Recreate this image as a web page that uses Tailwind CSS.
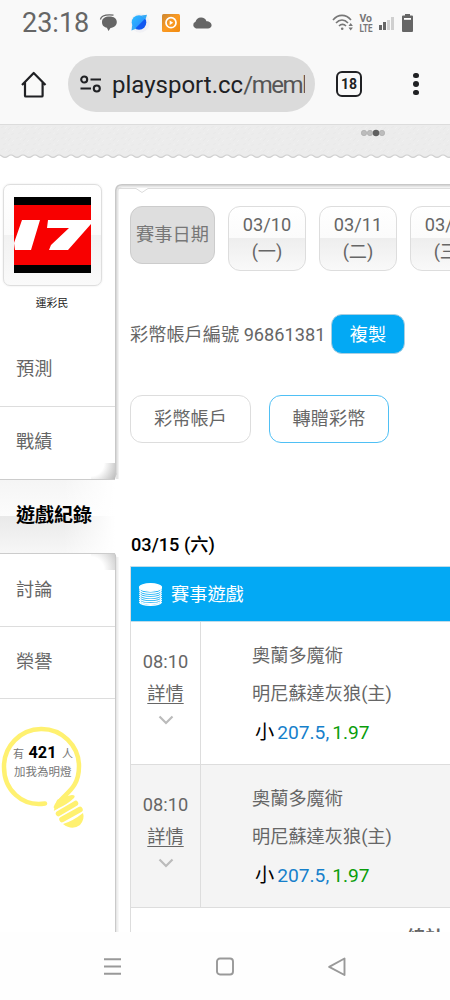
<!DOCTYPE html>
<html lang="zh-Hant">
<head>
<meta charset="utf-8">
<meta name="viewport" content="width=device-width">
<title>playsport.cc</title>
<script src="https://cdn.jsdelivr.net/npm/@tailwindcss/browser@4"></script>
</head>
<body class="w-[450px] h-[1000px] overflow-hidden bg-white flex flex-col text-[18.2px] leading-6 text-[#666] font-['Roboto','Noto_Sans_CJK_TC',sans-serif]">

<!-- Status bar -->
<header class="h-[124px] shrink-0 bg-[#f9f9f9] flex flex-col">
  <div class="h-[46px] flex items-center pl-[22px] text-[#666]">
    <span class="w-[67px] text-[27px] leading-[46px] whitespace-nowrap">23:18</span>
    <svg class="ml-[10px] w-[19px] h-[18px]" viewBox="0 0 19 18"><path d="M14.500 1.200C8 .5 2.300 1.500 1.400 5.500" fill="none" stroke="#666" stroke-width="1.200"/><path d="M10.500 2.600C15 2.600 17.800 4.800 17.800 8c0 3.500-2.500 5.400-6.300 5.900L9.500 17l-1.600-3.300C5 13 3 11.500 3 8c0-3.400 3-5.400 7.500-5.400Z" fill="#666"/></svg>
    <svg class="ml-3 w-[20px] h-[20px]" viewBox="0 0 20 20"><defs><linearGradient id="planet" x1="0" y1="0" x2="1" y2="1"><stop offset="0" stop-color="#2fc0ff"/><stop offset="0.550" stop-color="#2a9cff"/><stop offset="0.600" stop-color="#1258f0"/><stop offset="1" stop-color="#1258f0"/></linearGradient></defs><circle cx="10" cy="10" r="9.700" fill="#f1f1f5"/><circle cx="9" cy="9.500" r="7.300" fill="url(#planet)"/><path d="M1.500 17.500 2.200 12 6.500 15.500ZM11.500 2.500 17 1.800 15.500 6.500Z" fill="#35aaf5"/></svg>
    <svg class="ml-[12px] w-[18px] h-[18px]" viewBox="0 0 18 18"><defs><linearGradient id="orange" x1="0" y1="0" x2="1" y2="1"><stop offset="0" stop-color="#cc8733"/><stop offset=".5" stop-color="#fb9a22"/><stop offset="1" stop-color="#f08a10"/></linearGradient></defs><rect width="18" height="18" rx="1.500" fill="url(#orange)"/><circle cx="9" cy="8.700" r="5" fill="none" stroke="#fff" stroke-width="1.700"/><path d="M7.700 6.500v4.400L11.200 8.700Z" fill="#fff"/></svg>
    <svg class="ml-[12px] w-[20px] h-[12px]" viewBox="0 0 20 12"><path d="M4 11.500A3.500 3.500 0 0 1 3.500 4.800 5.800 5.800 0 0 1 14.500 4.300C17.500 4.300 19.600 6.200 19.600 8.300 19.600 10.200 18 11.500 16 11.500Z" fill="#666"/></svg>
    <svg class="ml-[120px] w-[22px] h-[18px]" viewBox="0 0 22 18" fill="none" stroke="#777" stroke-width="1.600"><path d="M1 6C6-.2 14-.2 19 6M4 9c3.500-4 8.500-4 12 0M7 12c2-2.200 5-2.200 7 0"/><circle cx="10.200" cy="14.800" r="1.300" fill="#777" stroke="none"/><path d="M16.500 12 18.700 9l2.200 3ZM16.500 13.500 18.700 16.500l2.200-3Z" fill="#777" stroke="none"/></svg>
    <svg class="ml-[5px] w-[14px] h-[20px]" viewBox="0 0 14 20" fill="#777" font-weight="700"><text x="0.500" y="9.300" font-size="11.500" textLength="12.500" lengthAdjust="spacingAndGlyphs">Vo</text><text x="0.500" y="18.800" font-size="11.500" textLength="13" lengthAdjust="spacingAndGlyphs">LTE</text></svg>
    <div class="ml-[6px] flex items-end gap-[1.500px] h-[13px]"><i class="w-[2.500px] h-[5px] bg-[#666]"></i><i class="w-[2.500px] h-[8px] bg-[#666]"></i><i class="w-[2.500px] h-[10px] bg-[#d0d0d0]"></i><i class="w-[2.500px] h-[13px] bg-[#d0d0d0]"></i></div>
    <svg class="ml-[8px] w-[11px] h-[18px]" viewBox="0 0 11 18"><path d="M3 0h5v1.500h2A1 1 0 0 1 11 2.500V17a1 1 0 0 1-1 1H1a1 1 0 0 1-1-1V2.500a1 1 0 0 1 1-1h2Z" fill="#666"/><path d="M2 4h7v1.800H2Z" fill="#fff"/></svg>
  </div>
  <!-- Address bar -->
  <div class="flex items-center mt-[10px] pl-[21px]">
    <svg class="w-[26px] h-[27px]" viewBox="0 0 26 27" fill="none" stroke="#202124" stroke-width="2.200"><path d="M1 14 12.700 2 24.500 14M4 11v13.700q0 .8.800.8h16q.8 0 .8-.8V11" stroke-linejoin="round"/></svg>
    <div class="ml-[21px] w-[247px] h-[56px] rounded-full bg-[#dbdbdb] flex items-center pl-[11px]">
      <svg class="w-[23px] h-[20px]" viewBox="0 0 23 20" fill="none" stroke="#202124" stroke-width="2.100"><circle cx="5.200" cy="5.500" r="3"/><circle cx="17.800" cy="14.500" r="3"/><path d="M11.500 5.500H22M1.500 14.500H12"/></svg>
      <span class="ml-[10px] mt-[2px] w-[193px] overflow-hidden whitespace-nowrap text-[24px] leading-8 text-[#202124]">playsport.cc<span class="tracking-[-1.400px] text-[#555]">/member</span></span>
    </div>
    <div class="ml-[21px] w-[26px] h-[26px] rounded-[6px] border-2 border-[#202124] text-[#202124] text-[14px] leading-none font-bold flex items-center justify-center">18</div>
    <div class="ml-[51px] flex flex-col gap-[3px]"><i class="size-[5.500px] rounded-full bg-[#202124]"></i><i class="size-[5.500px] rounded-full bg-[#202124]"></i><i class="size-[5.500px] rounded-full bg-[#202124]"></i></div>
  </div>
</header>

<!-- Page banner edge -->
<div class="h-[34px] shrink-0 border-t border-[#dcdcdc]">
  <svg class="block w-[450px] h-[34px]" viewBox="0 0 450 34">
    <defs>
      <pattern id="wave" x="-1" width="12" height="34" patternUnits="userSpaceOnUse"><path d="M0 0H12V30C9 30 9 32.300 6 32.300S3 30 0 30Z" fill="#ececec"/><path d="M0 30C3 30 3 32.300 6 32.300S9 30 12 30" fill="none" stroke="#cfcfcf" stroke-width="1.200"/></pattern>
      <pattern id="grain" width="15" height="11" patternUnits="userSpaceOnUse"><path d="M1 3 4 1M8 5l3-3M3 9l3-2M11 10l3-2" stroke="#e8e8e8" stroke-width="1"/><path d="M5 4l2-2M12 6l2-2M8 9l2-1" stroke="#f0f0f0" stroke-width="1"/></pattern>
    </defs>
    <rect width="450" height="34" fill="url(#wave)"/><rect width="450" height="29" fill="url(#grain)"/>
    <g fill="#bcbcbc" stroke="#a8a8a8" stroke-width=".6"><circle cx="364" cy="8" r="2.700"/><circle cx="370" cy="8" r="2.700"/><circle cx="382" cy="8" r="2.700"/></g><circle cx="376" cy="8" r="3.200" fill="#606060"/>
  </svg>
</div>

<div class="h-[774px] shrink-0 overflow-hidden flex pt-[26px]">
  <!-- Sidebar -->
  <aside class="w-[115px] shrink-0 flex flex-col">
    <div class="ml-[3px] w-[99px] h-[102px] rounded-[7px] border border-[#dedede] shadow-[0_0_2px_#e5e5e5] bg-[linear-gradient(#fff_0%,#fbfbfb_50%,#f2f2f2_50%,#fafafa_100%)] pl-[10px] pt-[12px]">
      <svg class="w-[77px] h-[76px]" viewBox="0 0 77 76"><rect width="77" height="76" fill="#000"/><rect y="8" width="77" height="60" fill="#f80000"/><path d="M8 23H26L17 53H1L0 46ZM34 23H77V27L54 53H35L37 48 55 31H33Z" fill="#fff"/></svg>
    </div>
    <div class="mt-[9px] w-[104px] text-center text-[10.800px] leading-[18px] text-[#222]">運彩民</div>
    <nav class="mt-[18px] flex flex-col">
      <a class="h-[76px] pl-4 leading-[75px] border-b border-[#ddd]">預測</a>
      <a class="h-[73px] pl-4 leading-[70px] border-b border-[#ccc] bg-[radial-gradient(circle_at_0_0,transparent_45%,#bbb_100%)] bg-no-repeat bg-[size:24px_16px] bg-right-bottom">戰績</a>
      <a class="h-[73px] w-[115px] pl-4 text-[19px] leading-[72px] font-bold text-black whitespace-nowrap bg-[linear-gradient(90deg,transparent_55%,#fff_100%),linear-gradient(#f5f5f5_0%,#fcfcfc_50%,#e9e9e9_50%,#f7f7f7_100%)]">遊戲紀錄</a>
      <a class="h-[74px] pl-4 leading-[71px] border-y border-t-[#ccc] border-b-[#ddd] bg-[radial-gradient(circle_at_0_100%,transparent_45%,#ccc_100%)] bg-no-repeat bg-[size:24px_16px] bg-right-top">討論</a>
      <a class="h-[72px] pl-4 leading-[70px] border-b border-[#ddd]">榮譽</a>
    </nav>
    <svg class="mt-[26px] w-[88px] h-[106px]" viewBox="0 0 88 106">
      <g fill="none" stroke="#fff170" stroke-width="4.500" stroke-linecap="round"><path d="M45 78.500C22 82 4 65 4 42A37.500 37.500 0 0 1 79 41C79 67 61 69 56 82"/></g>
      <path d="M54 85 57 75Q62 72 72 70 76 70 74 73Q68 79 57 84Q53 87 54 85Z" fill="#fff170"/>
      <g stroke="#fff170" stroke-width="5.500" stroke-linecap="round"><path d="M58.500 88.500 75.500 78.500M62 94.500 80 84.500"/></g>
      <path d="M63 99Q73 96 83 88 85 94 80 100 72 106 63 99Z" fill="#fff170"/>
      <g font-size="11.500" fill="#777"><text x="13" y="33" font-size="11">有</text><text x="28.500" y="33" font-size="16.500" font-weight="700" fill="#000" textLength="28" lengthAdjust="spacingAndGlyphs">421</text><text x="62" y="33" font-size="11">人</text><text x="14" y="50.500">加我為明燈</text></g>
    </svg>
  </aside>

  <!-- Content -->
  <main class="w-[335px] shrink-0 flex flex-col relative">
    <svg class="absolute left-0 top-0 w-[335px] h-[750px]" viewBox="0 0 335 750" fill="none">
      <path d="M2 295V8Q2 2 8 2H335" stroke="#e6e6e6" stroke-width="3"/>
      <path d="M.7 291V7Q1 .8 7 .8H335" stroke="#c8c8c8" stroke-width="1.500"/>
      <path d="M2 4.500H21L27 8.500 33 4.500H335" stroke="#ddd"/>
      <path d="M2.500 373V750" stroke="#f0f0f0" stroke-width="2"/>
      <path d="M.7 750V374Q.7 369 -3 369M-3 295Q.7 295 .7 289" stroke="#c8c8c8" stroke-width="1.300"/>
    </svg>
    <div class="ml-[15px] mt-[22px] flex items-start gap-[13px] text-center">
      <div class="w-[85px] h-[58px] shrink-0 rounded-xl border border-[#ccc] bg-[#dedede] leading-[55px] text-[#777]">賽事日期</div>
      <div class="w-[78px] h-[65px] shrink-0 rounded-xl border border-[#ddd] bg-[linear-gradient(#fff_0%,#fbfbfb_50%,#eee_50%,#f9f9f9_100%)] pt-[5px] leading-[26.500px]">03/10<br>(一)</div>
      <div class="w-[78px] h-[65px] shrink-0 rounded-xl border border-[#ddd] bg-[linear-gradient(#fff_0%,#fbfbfb_50%,#eee_50%,#f9f9f9_100%)] pt-[5px] leading-[26.500px]">03/11<br>(二)</div>
      <div class="w-[78px] h-[65px] shrink-0 rounded-xl border border-[#ddd] bg-[linear-gradient(#fff_0%,#fbfbfb_50%,#eee_50%,#f9f9f9_100%)] pt-[5px] leading-[26.500px]">03/12<br>(三)</div>
    </div>
    <div class="ml-[15px] mt-[43px] h-10 flex items-center">
      <span class="w-[201px] mt-[2px] whitespace-nowrap">彩幣帳戶編號 96861381</span>
      <span class="w-[74px] h-10 rounded-[11px] border border-[#a9cfe2] bg-[#03a9f4] text-white text-center leading-[40px]">複製</span>
    </div>
    <div class="ml-[15px] mt-[41px] flex gap-[18px] text-center leading-[46px]">
      <span class="w-[121px] h-[48px] rounded-xl border border-[#ddd]">彩幣帳戶</span>
      <span class="w-[120px] h-[48px] rounded-xl border border-[#4fc0f5]">轉贈彩幣</span>
    </div>
    <h2 class="ml-[16px] mt-[87px] h-[36px] leading-[30px] font-medium text-black">03/15 (六)</h2>
    <section class="ml-[15px] mt-[6px] w-[400px] border-l border-[#ddd]">
      <div class="h-[56px] bg-[#03a9f4] border-y border-[#bfdcea] text-white flex items-center">
        <svg class="ml-[8px] w-[23px] h-[23px]" viewBox="0 0 23 23" fill="none" stroke="#fff" stroke-width="1.400"><ellipse cx="11.500" cy="4.500" rx="11" ry="3.700" fill="#fff"/><path d="M.5 6.500c1 5 21 5 22 0M.5 8.600c1 5 21 5 22 0M.5 10.700c1 5 21 5 22 0M.5 12.800c1 5 21 5 22 0M.5 14.900c1 5 21 5 22 0M.5 17c1 5 21 5 22 0M.5 18.900c1 4.500 21 4.500 22 0"/></svg>
        <span class="ml-[9px] mt-[2px]">賽事遊戲</span>
      </div>
      <div class="h-[143px] flex border-b border-[#ddd]">
        <div class="w-[70px] border-r border-[#ddd] flex flex-col items-center pt-[28px]"><span class="h-8">08:10</span><span class="underline underline-offset-[3px] decoration-1 h-8">詳情</span><svg class="mt-[1px] w-[16px] h-[10px]" viewBox="0 0 16 10"><path d="M1.500 1.500 8 8l6.500-6.500" fill="none" stroke="#bbb" stroke-width="2.200"/></svg></div>
        <div class="pl-[51px] pt-[22px]"><p class="h-[38px]">奧蘭多魔術</p><p class="h-[39px]">明尼蘇達灰狼(主)</p><p class="pl-[3px] flex gap-[3px] text-[19.200px] text-black"><span>小</span><span class="text-[#1680cb]">207.5,</span><span class="text-[#0a9d0a]">1.97</span></p></div>
      </div>
      <div class="h-[143px] flex border-b border-[#ddd] bg-[#f4f4f4]">
        <div class="w-[70px] border-r border-[#ddd] flex flex-col items-center pt-[28px]"><span class="h-8">08:10</span><span class="underline underline-offset-[3px] decoration-1 h-8">詳情</span><svg class="mt-[1px] w-[16px] h-[10px]" viewBox="0 0 16 10"><path d="M1.500 1.500 8 8l6.500-6.500" fill="none" stroke="#bbb" stroke-width="2.200"/></svg></div>
        <div class="pl-[51px] pt-[22px]"><p class="h-[38px]">奧蘭多魔術</p><p class="h-[39px]">明尼蘇達灰狼(主)</p><p class="pl-[3px] flex gap-[3px] text-[19.200px] text-black"><span>小</span><span class="text-[#1680cb]">207.5,</span><span class="text-[#0a9d0a]">1.97</span></p></div>
      </div>
      <div class="pl-[276px] pt-[18px] font-bold">總計</div>
    </section>
  </main>
</div>

<!-- System navigation -->
<footer class="h-[68px] shrink-0 bg-[#fefefe] flex items-start pt-[25px] pl-[103px]">
  <svg class="w-[19px] h-[19px]" viewBox="0 0 19 19" stroke="#999" stroke-width="1.900"><path d="M1 2.200H18M1 9.500H18M1 16.800H18"/></svg>
  <svg class="ml-[94px] w-[18px] h-[19px]" viewBox="0 0 18 19" fill="none" stroke="#999" stroke-width="1.900"><rect x="1" y="1.500" width="16" height="16" rx="3"/></svg>
  <svg class="ml-[94px] w-[18px] h-[20px]" viewBox="0 0 18 20" fill="none" stroke="#999" stroke-width="1.900" stroke-linejoin="round"><path d="M16.500 1.500V18L1.200 9.800Z"/></svg>
</footer>
</body>
</html>
